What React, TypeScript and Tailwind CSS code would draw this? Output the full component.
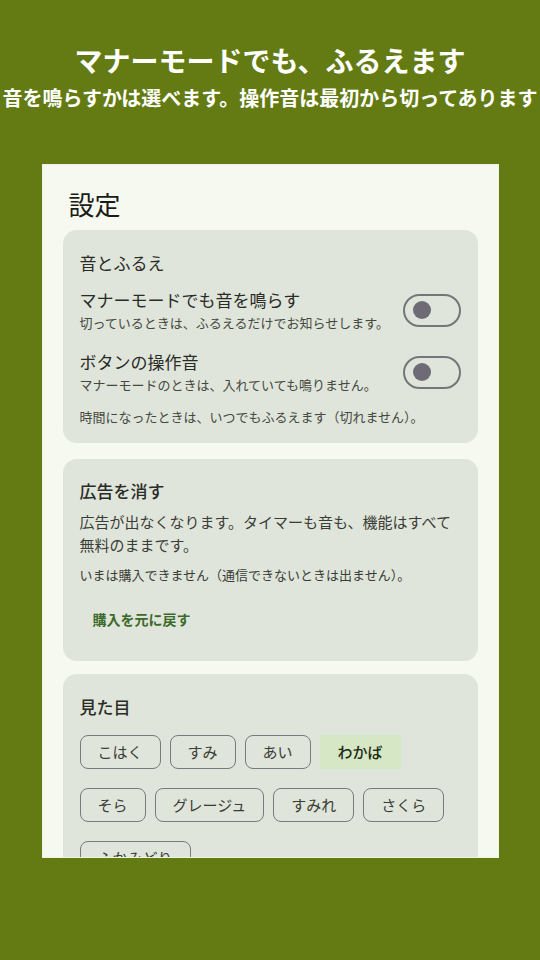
const font = "font-['Noto_Sans_CJK_JP','Noto_Sans',sans-serif]";

function Toggle() {
  return (
    <div className="w-[58px] h-[33px] shrink-0 rounded-full border-2 border-[#74777a] flex items-center pl-[8px]">
      <div className="w-[18px] h-[18px] rounded-full bg-[#6e6a76]" />
    </div>
  );
}

function SwitchRow({ title, sub }: { title: string; sub: string }) {
  return (
    <div className="flex items-center justify-between">
      <div className="flex flex-col">
        <span className="text-[17px] leading-[24px] text-[#2a2b27]">{title}</span>
        <span className="text-[13px] leading-[18px] mt-[2px] text-[#45483f]">{sub}</span>
      </div>
      <Toggle />
    </div>
  );
}

function Chip({ label, selected }: { label: string; selected?: boolean }) {
  if (selected) {
    return (
      <div className="h-[34px] px-[18px] flex items-center text-[15px] font-medium text-[#1d2a12] bg-[#d6e7c6]">
        {label}
      </div>
    );
  }
  return (
    <div className="h-[34px] px-[17px] flex items-center text-[15px] text-[#3a3c37] border border-[#7a7b78] rounded-[8px]">
      {label}
    </div>
  );
}

export default function App() {
  const row1 = ["こはく", "すみ", "あい"];
  const row2 = ["そら", "グレージュ", "すみれ", "さくら"];
  return (
    <div className={`w-[540px] h-[960px] bg-[#647b14] overflow-hidden flex flex-col items-center ${font}`}>
      <h1 className="mt-[42px] text-[28px] leading-[36px] font-bold text-white">マナーモードでも、ふるえます</h1>
      <p className="mt-[6px] text-[20px] leading-[28px] font-bold text-white whitespace-nowrap">
        音を鳴らすかは選べます。操作音は最初から切ってあります
      </p>

      <div className="mt-[52px] w-[457px] h-[694px] bg-[#f6f9f0] border border-[#eef3e4] overflow-hidden px-[20px]">
        <div className="pl-[6px] pt-[23px] text-[26px] leading-[32px] text-[#1b1c18]">設定</div>

        <div className="mt-[10px] bg-[#dfe5da] rounded-[14px] px-[17px] pt-[20px] pb-[17px]">
          <div className="text-[17px] leading-[26px] text-[#2a2b27]">音とふるえ</div>
          <div className="mt-[12px] flex flex-col gap-[18px]">
            <SwitchRow title="マナーモードでも音を鳴らす" sub="切っているときは、ふるえるだけでお知らせします。" />
            <SwitchRow title="ボタンの操作音" sub="マナーモードのときは、入れていても鳴りません。" />
          </div>
          <div className="mt-[14px] text-[13px] leading-[18px] text-[#45483f]">
            時間になったときは、いつでもふるえます（切れません）。
          </div>
        </div>

        <div className="mt-[16px] bg-[#dfe5da] rounded-[14px] px-[17px] pt-[19px] pb-[22px]">
          <div className="text-[17px] leading-[26px] font-medium text-[#2a2b27]">広告を消す</div>
          <p className="mt-[6px] text-[15px] leading-[23px] text-[#3a3c37]">
            広告が出なくなります。タイマーも音も、機能はすべて
            <br />
            無料のままです。
          </p>
          <div className="mt-[10px] text-[13px] leading-[18px] text-[#3a3c37]">
            いまは購入できません（通信できないときは出ません）。
          </div>
          <button className="mt-[15px] h-[40px] px-[13px] text-[14px] font-bold text-[#3d6a2b]">購入を元に戻す</button>
        </div>

        <div className="mt-[13px] bg-[#dfe5da] rounded-[14px] px-[17px] pt-[20px] pb-[20px]">
          <div className="text-[17px] leading-[26px] font-medium text-[#2a2b27]">見た目</div>
          <div className="mt-[15px] flex flex-col gap-[19px]">
            <div className="flex gap-[9px]">
              {row1.map((c) => (
                <Chip key={c} label={c} />
              ))}
              <Chip label="わかば" selected />
            </div>
            <div className="flex gap-[9px]">
              {row2.map((c) => (
                <Chip key={c} label={c} />
              ))}
            </div>
            <div className="flex gap-[9px]">
              <Chip label="ふかみどり" />
            </div>
          </div>
        </div>
      </div>
    </div>
  );
}
